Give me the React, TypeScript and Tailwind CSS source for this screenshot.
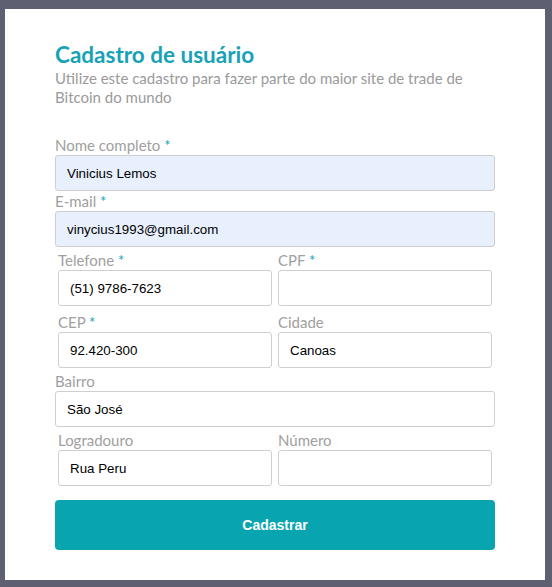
import React from 'react';

const labelCls = "block h-[20px] text-[15px] leading-[20px] text-[#a0a0a0] font-['Lato','Open_Sans',sans-serif]";
const inputCls =
  "block w-full h-[36px] rounded-[3px] border border-[#cfcfcf] px-[11px] text-[13.333px] text-black font-['Liberation_Sans',Arial,sans-serif] outline-none";

const Req = () => <span className="text-[#17a2b8]"> *</span>;

interface FieldProps {
  label: string;
  value?: string;
  required?: boolean;
  filled?: boolean;
}

const Field: React.FC<FieldProps> = ({ label, value = '', required, filled }) => (
  <div className="flex-1 min-w-0">
    <label className={labelCls}>
      {label}
      {required && <Req />}
    </label>
    <input
      readOnly
      value={value}
      className={`${inputCls} ${filled ? 'bg-[#e8f0fe]' : 'bg-white'}`}
    />
  </div>
);

export default function App() {
  return (
    <div className="min-h-screen bg-[#5e6071] pt-[9px] pl-[5px]">
      <div className="w-[540px] h-[571px] bg-white px-[50px] pt-[32px]">
        {/* Header */}
        <h1 className="text-[22.5px] leading-[28px] font-bold text-[#17a2b8] font-['Lato','Open_Sans',sans-serif]">
          Cadastro de usuário
        </h1>
        <p className="text-[15px] leading-[19px] text-[#9a9a9a] font-['Lato','Open_Sans',sans-serif] pr-[20px]">
          Utilize este cadastro para fazer parte do maior site de trade de Bitcoin do mundo
        </p>

        {/* Form */}
        <form className="mt-[28px]">
          <Field label="Nome completo" value="Vinicius Lemos" required filled />
          <Field label="E-mail" value="vinycius1993@gmail.com" required filled />

          <div className="flex gap-[6px] px-[3px] mt-[3px]">
            <Field label="Telefone" value="(51) 9786-7623" required />
            <Field label="CPF" required />
          </div>

          <div className="flex gap-[6px] px-[3px] mt-[6px]">
            <Field label="CEP" value="92.420-300" required />
            <Field label="Cidade" value="Canoas" />
          </div>

          <div className="mt-[3px]">
            <Field label="Bairro" value="São José" />
          </div>

          <div className="flex gap-[6px] px-[3px] mt-[3px]">
            <Field label="Logradouro" value="Rua Peru" />
            <Field label="Número" />
          </div>

          <button
            type="button"
            className="mt-[14px] w-full h-[50px] rounded-[4px] bg-[#08a5b1] text-white text-[14px] font-bold font-['Liberation_Sans',Arial,sans-serif]"
          >
            Cadastrar
          </button>
        </form>
      </div>
    </div>
  );
}
